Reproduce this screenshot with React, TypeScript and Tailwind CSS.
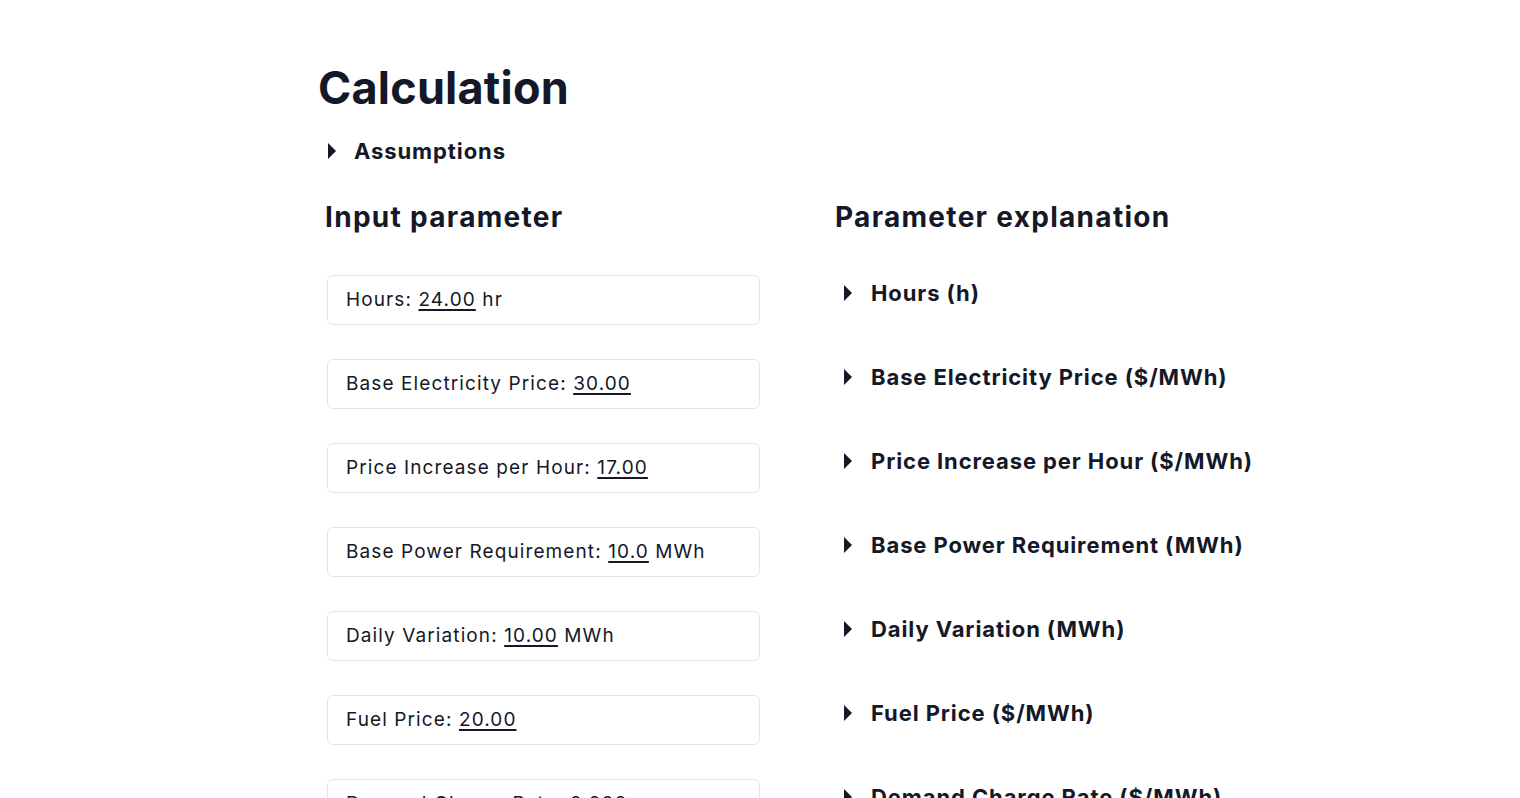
const inputs: { label: string; value: string; unit?: string }[] = [
  { label: "Hours", value: "24.00", unit: "hr" },
  { label: "Base Electricity Price", value: "30.00" },
  { label: "Price Increase per Hour", value: "17.00" },
  { label: "Base Power Requirement", value: "10.0", unit: "MWh" },
  { label: "Daily Variation", value: "10.00", unit: "MWh" },
  { label: "Fuel Price", value: "20.00" },
  { label: "Demand Charge Rate", value: "0.000" },
];

const explanations = [
  "Hours (h)",
  "Base Electricity Price ($/MWh)",
  "Price Increase per Hour ($/MWh)",
  "Base Power Requirement (MWh)",
  "Daily Variation (MWh)",
  "Fuel Price ($/MWh)",
  "Demand Charge Rate ($/MWh)",
];

function Caret() {
  return (
    <svg width="10" height="16" viewBox="0 0 10 16" className="shrink-0">
      <path d="M1 0 L9 8 L1 16 Z" fill="#141827" />
    </svg>
  );
}

export default function App() {
  return (
    <div
      className="h-[798px] overflow-hidden bg-white text-[#141827]"
      style={{ fontFamily: "Inter, 'Open Sans', sans-serif" }}
    >
      <div className="pl-[318px] pt-[62px]">
        <h1 className="text-[45px] font-bold leading-[52px] tracking-[0.2px]">Calculation</h1>
        <div className="mt-[22px] flex h-[30px] items-center gap-[17px] pl-[9px]">
          <Caret />
          <span className="text-[22px] font-bold tracking-[0.9px]">Assumptions</span>
        </div>

        <div className="mt-[34px] grid grid-cols-[510px_1fr] pl-[7px]">
          <div>
            <h2 className="h-[34px] text-[28px] font-bold leading-[34px] tracking-[1.3px]">Input parameter</h2>
            <div className="mt-[41px] flex flex-col gap-[34px] pl-[2px]">
              {inputs.map((p) => (
                <div
                  key={p.label}
                  className="flex h-[50px] w-[433px] items-center rounded-[6px] border border-[#e3e5e8] px-[18px] pt-[1px] text-[19px] tracking-[1.1px]"
                >
                  <span>
                    {p.label}: <span className="underline underline-offset-[3px] decoration-[2px]">{p.value}</span>
                    {p.unit ? ` ${p.unit}` : ""}
                  </span>
                </div>
              ))}
            </div>
          </div>
          <div>
            <h2 className="h-[34px] text-[28px] font-bold leading-[34px] tracking-[1.3px]">Parameter explanation</h2>
            <div className="mt-[34px] flex flex-col gap-[34px] pl-[8px]">
              {explanations.map((e) => (
                <div key={e} className="flex h-[50px] items-center gap-[18px]">
                  <Caret />
                  <span className="text-[22px] font-bold tracking-[0.9px]">{e}</span>
                </div>
              ))}
            </div>
          </div>
        </div>
      </div>
    </div>
  );
}
